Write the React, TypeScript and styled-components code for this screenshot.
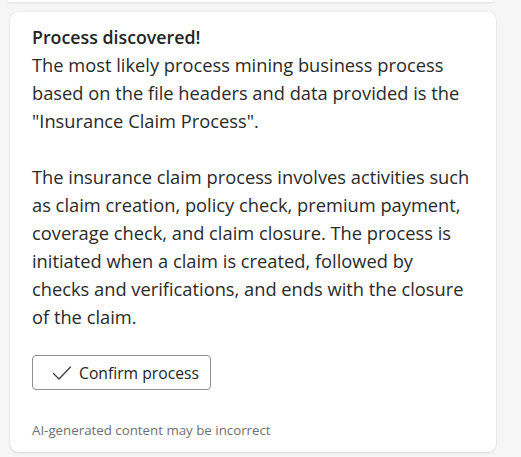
import styled, { createGlobalStyle } from "styled-components";

const GlobalStyle = createGlobalStyle`
  html, body {
    margin: 0;
    padding: 0;
    background: #f6f6f6;
  }
  body {
    font-family: "Open Sans", "Noto Sans", sans-serif;
    color: #242424;
  }
`;

const Feed = styled.div`
  display: flex;
  flex-direction: column;
  gap: 10px;
  padding: 0 25px 8px 10px;
`;

const PrevCard = styled.div`
  height: 2px;
  margin: 0 3px 0 -2px;
  background: #ffffff;
  border-radius: 0 0 8px 8px;
  box-shadow: 0 1px 3px rgba(0, 0, 0, 0.1);
`;

const Card = styled.div`
  background: #ffffff;
  border-radius: 8px;
  padding: 11px 22px 14px 22px;
  box-shadow: 0 0 2px rgba(0, 0, 0, 0.1), 0 1px 2px rgba(0, 0, 0, 0.1);
  display: flex;
  flex-direction: column;
  align-items: flex-start;
`;

const Message = styled.div`
  font-size: 18.3px;
  line-height: 28px;
  color: #2a2a2a;
`;

const Title = styled.div`
  font-weight: 600;
  font-size: 17.8px;
  color: #242424;
`;

const Paragraph = styled.p`
  margin: 0;
  & + & {
    margin-top: 28px;
  }
`;

const OutlineButton = styled.button`
  margin-top: 24px;
  height: 35px;
  display: inline-flex;
  align-items: center;
  gap: 7px;
  padding: 0 11px 0 19px;
  background: #ffffff;
  border: 1px solid #8f8f8f;
  border-radius: 4px;
  font-family: "Open Sans", "Noto Sans", sans-serif;
  font-size: 15.7px;
  color: #242424;
  cursor: pointer;
  &:hover { background: #f5f5f5; }
`;

const CheckIcon = styled.svg`
  width: 20px;
  height: 20px;
  flex: none;
`;

const Disclaimer = styled.div`
  margin-top: 32px;
  font-size: 13.3px;
  line-height: 16px;
  color: #707070;
`;

export default function App() {
  return (
    <>
      <GlobalStyle />
      <Feed>
        <PrevCard />
        <Card>
          <Message>
            <Title>Process discovered!</Title>
            <Paragraph>
              The most likely process mining business process based on the file headers and data provided is the
              "Insurance Claim Process".
            </Paragraph>
            <Paragraph>
              The insurance claim process involves activities such as claim creation, policy check, premium payment,
              coverage check, and claim closure. The process is initiated when a claim is created, followed by checks
              and verifications, and ends with the closure of the claim.
            </Paragraph>
          </Message>
          <OutlineButton>
            <CheckIcon viewBox="0 0 20 20" fill="none">
              <path d="M1.5 10.5 L7 16 L18.5 4" stroke="#424242" strokeWidth="1.4" strokeLinecap="round" strokeLinejoin="round" />
            </CheckIcon>
            Confirm process
          </OutlineButton>
          <Disclaimer>AI-generated content may be incorrect</Disclaimer>
        </Card>
      </Feed>
    </>
  );
}
